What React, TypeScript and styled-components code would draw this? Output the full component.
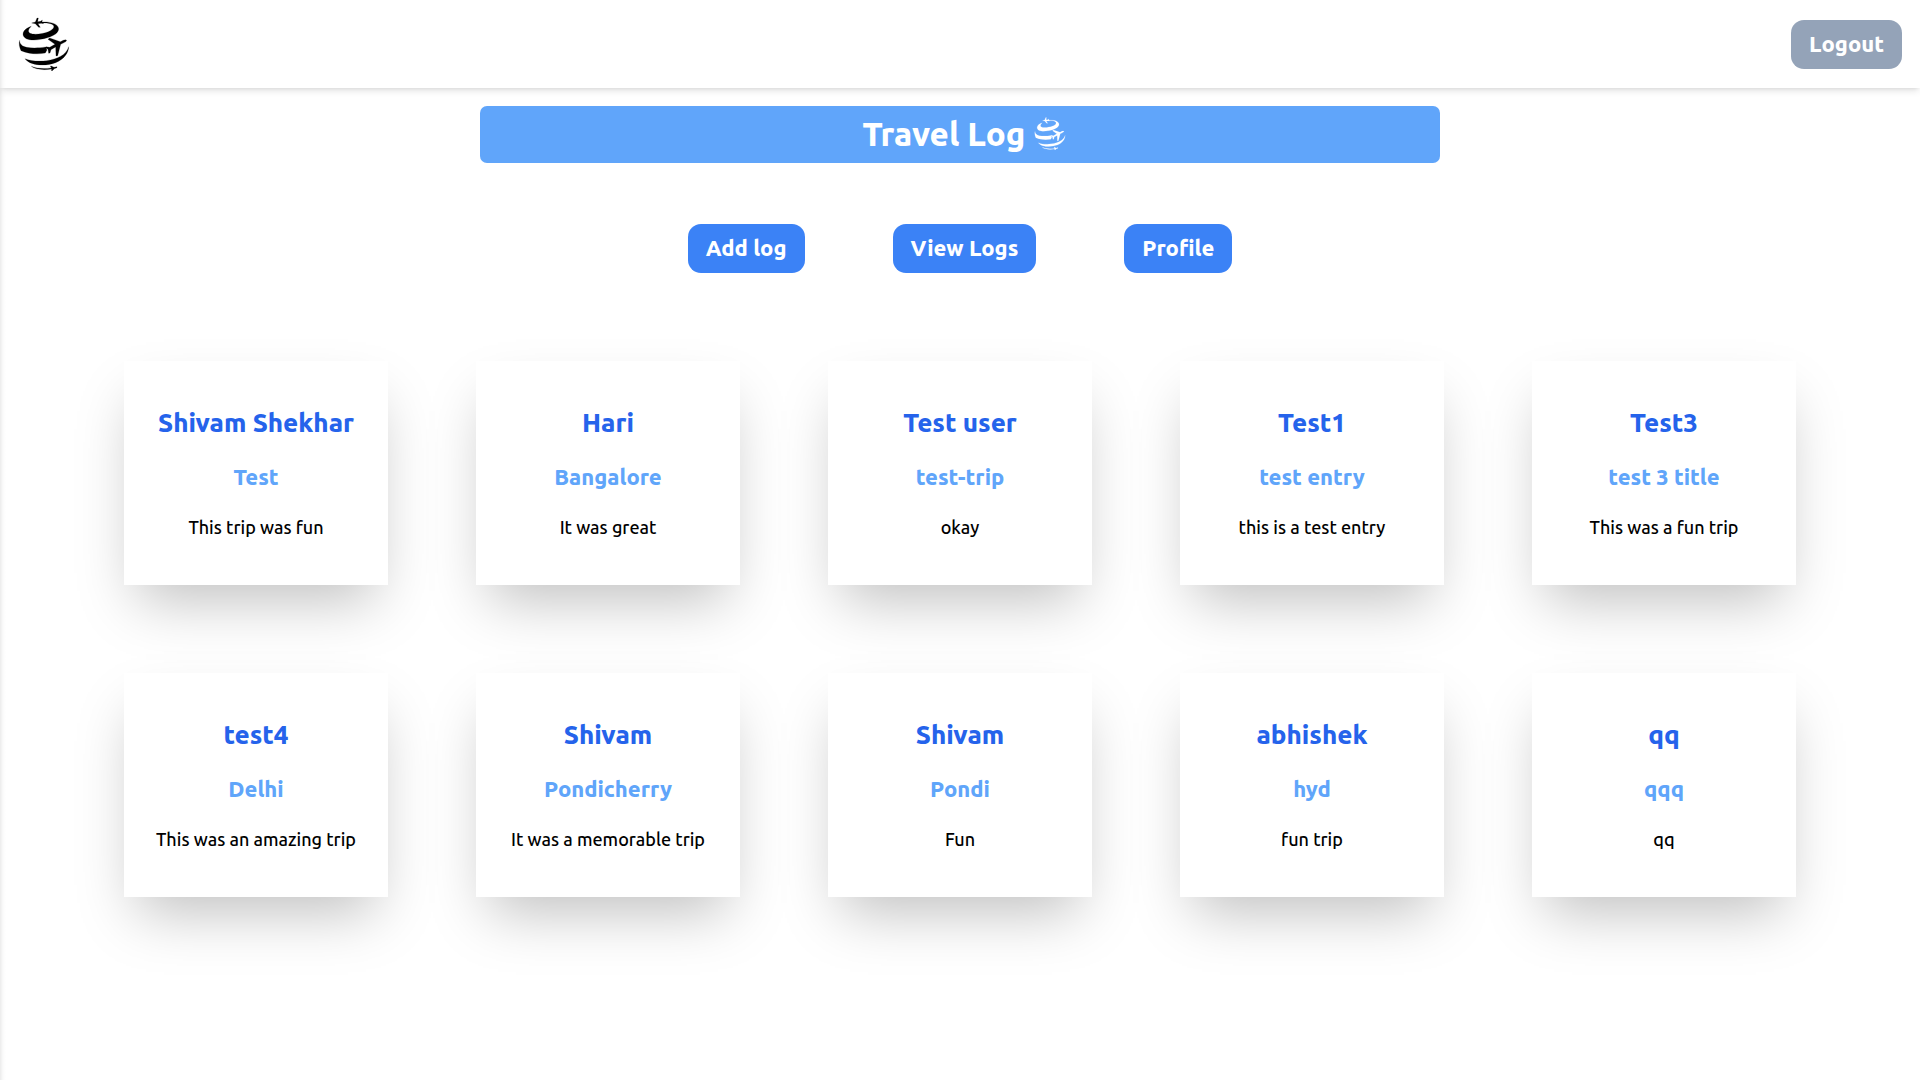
import React from "react";
import styled, { createGlobalStyle } from "styled-components";

const GlobalStyle = createGlobalStyle`
  *, *::before, *::after { box-sizing: border-box; }
  body {
    margin: 0;
    background: #fff;
    color: #000;
    font-family: Ubuntu, "Noto Sans", "Open Sans", sans-serif;
  }
  h1, h2, h3, p, ul { margin: 0; padding: 0; }
`;

const Page = styled.div`
  min-height: 100vh;
  background: linear-gradient(to right, rgba(0, 0, 0, 0.08), rgba(0, 0, 0, 0.02) 3px, transparent 6px);
`;

const Header = styled.header`
  display: flex;
  align-items: center;
  justify-content: space-between;
  height: 88px;
  padding: 0 18px;
  box-shadow: 0 4px 7px -1px rgba(0, 0, 0, 0.1), 0 2px 4px -2px rgba(0, 0, 0, 0.1);
`;

const HomeLink = styled.a`
  display: flex;
  color: #000;
`;

const Button = styled.button<{ $tone: string }>`
  padding: 8px 18px 10px;
  border: 0;
  border-radius: 13px;
  background: ${({ $tone }) => $tone};
  color: #fff;
  font: inherit;
  font-size: 22px;
  font-weight: 800;
  line-height: 31px;
  cursor: pointer;
`;

const Banner = styled.h1`
  display: flex;
  align-items: center;
  justify-content: center;
  gap: 9px;
  width: 50%;
  margin: 18px auto 0;
  padding: 8px 9px 10px 18px;
  border-radius: 7px;
  background: #60a5fa;
  color: #fff;
  font-size: 33px;
  font-weight: 800;
  line-height: 39px;
`;

const Actions = styled.nav`
  display: flex;
  justify-content: center;
  gap: 88px;
  margin-top: 61px;
`;

const LogGrid = styled.ul`
  display: grid;
  grid-template-columns: repeat(auto-fill, 264px);
  justify-content: center;
  gap: 88px;
  padding: 88px;
  list-style: none;
`;

const Card = styled.li`
  display: flex;
  flex-direction: column;
  align-items: center;
  gap: 20px;
  padding: 44px 18px;
  background: #fff;
  text-align: center;
  white-space: nowrap;
  box-shadow: 0 28px 55px -13px rgba(0, 0, 0, 0.25);
`;

const Author = styled.h2`
  color: #2563eb;
  font-size: 26px;
  font-weight: 800;
  line-height: 36px;
`;

const Title = styled.h3`
  color: #60a5fa;
  font-size: 22px;
  font-weight: 800;
  line-height: 32px;
`;

const Note = styled.p`
  font-size: 18px;
  font-weight: 500;
  line-height: 28px;
`;

/* Globe wrapped in three ribbons, with an airliner crossing it. */
function Globe({ size }: { size: number }) {
  return (
    <svg
      width={size}
      viewBox="12 14 156 164"
      fill="currentColor"
      stroke="currentColor"
      strokeWidth={0.6}
      strokeLinejoin="round"
      aria-hidden="true"
    >
      <path d="M80 29C106 27 134 33 134 50C133 66 108 76 80 81C55 86 28 83 27 66C27 54 40 46 52 42C44 49 40 58 48 63C60 68 86 65 103 58C116 53 124 44 117 38C110 32 95 31 80 32Z" />
      <path d="M53 32L64 29L69 17L73 17L71 28L80 27L85 23L84 29L89 34L82 33L72 34L79 45L74 45L64 34Z" />
      <path d="M17 84C17 96 24 102 38 105C55 108 77 107 95 104L99 113L94 122C73 126 48 126 21 115C16 104 14 94 17 84Z" />
      <path d="M158 84C155 80 148 84 139 88L107 77L102 81L123 96L107 105L96 103L94 106L102 111L104 123L108 122L111 112L125 104L126 131L131 130L140 96C148 92 157 89 158 84Z" />
      <path d="M164 103C164 121 151 140 125 151C96 162 48 161 33 139C48 146 74 148 98 145C130 140 157 128 164 103Z" />
      <path d="M52 162C67 169 91 170 112 167L109 161L112 161L120 165L129 163L129 166L121 169L115 175L112 175L113 170C90 174 64 172 52 162Z" />
    </svg>
  );
}

const logs = [
  ["Shivam Shekhar", "Test", "This trip was fun"],
  ["Hari", "Bangalore", "It was great"],
  ["Test user", "test-trip", "okay"],
  ["Test1", "test entry", "this is a test entry"],
  ["Test3", "test 3 title", "This was a fun trip"],
  ["test4", "Delhi", "This was an amazing trip"],
  ["Shivam", "Pondicherry", "It was a memorable trip"],
  ["Shivam", "Pondi", "Fun"],
  ["abhishek", "hyd", "fun trip"],
  ["qq", "qqq", "qq"],
];

export default function App() {
  return (
    <Page>
      <GlobalStyle />
      <Header>
        <HomeLink href="#" aria-label="Home"><Globe size={52} /></HomeLink>
        <Button type="button" $tone="#94a3b8">Logout</Button>
      </Header>
      <main>
        <Banner>Travel Log <Globe size={32} /></Banner>
        <Actions>
          <Button type="button" $tone="#3b82f6">Add log</Button>
          <Button type="button" $tone="#3b82f6">View Logs</Button>
          <Button type="button" $tone="#3b82f6">Profile</Button>
        </Actions>
        <LogGrid>
          {logs.map(([author, title, note], i) => (
            <Card key={i}>
              <Author>{author}</Author>
              <Title>{title}</Title>
              <Note>{note}</Note>
            </Card>
          ))}
        </LogGrid>
      </main>
    </Page>
  );
}
